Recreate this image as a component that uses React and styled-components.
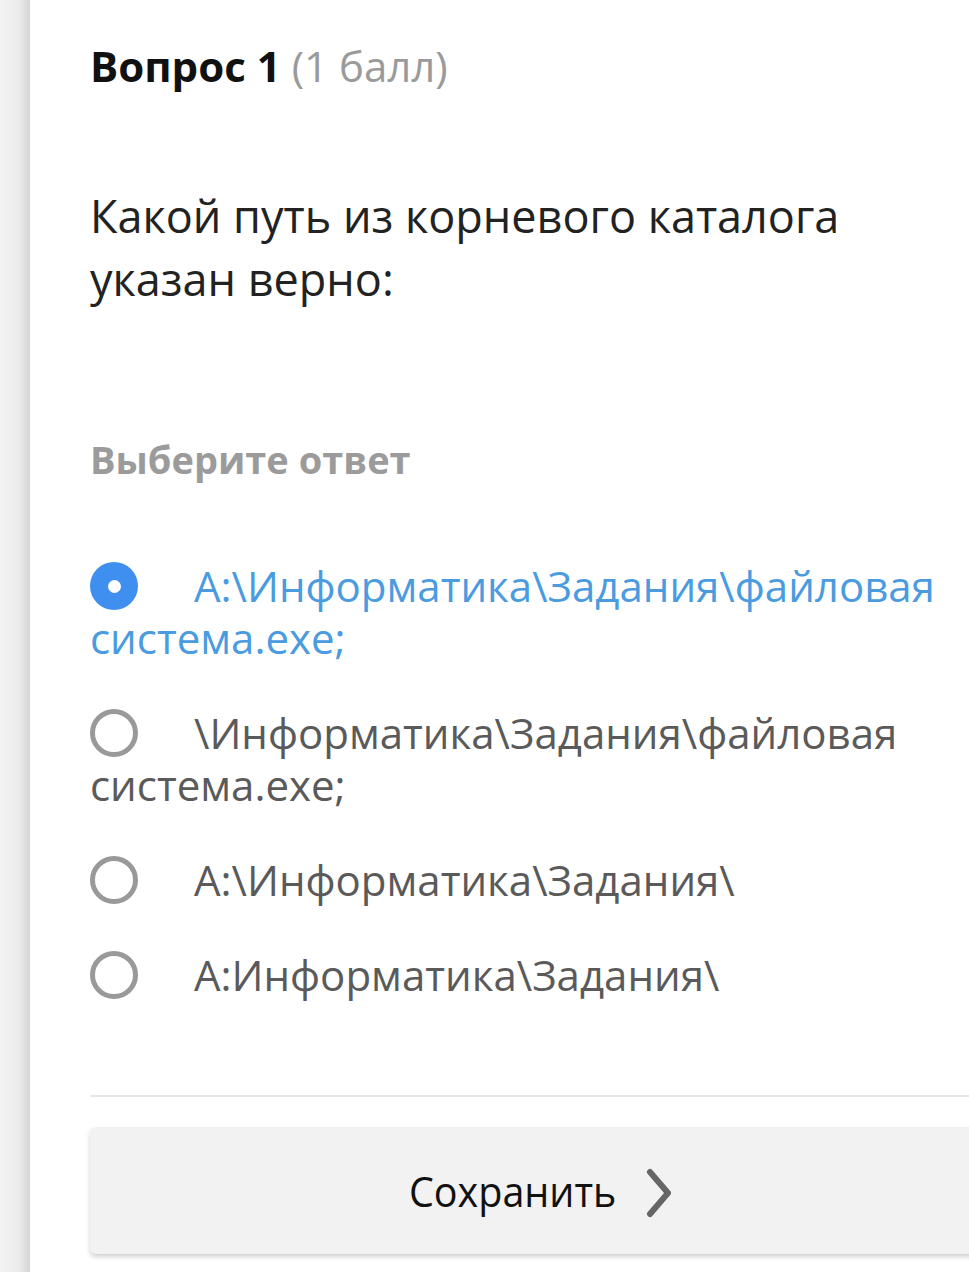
import React, { useState } from 'react';
import styled, { createGlobalStyle } from 'styled-components';

const GlobalStyle = createGlobalStyle`
  html, body {
    margin: 0;
    padding: 0;
    background: #ffffff;
    overflow-x: hidden;
  }
  body {
    font-family: "Open Sans", "Noto Sans", sans-serif;
  }
`;

const Page = styled.div`
  display: flex;
  min-height: 1272px;
`;

const SideStrip = styled.div`
  width: 30px;
  flex-shrink: 0;
  background: linear-gradient(to right, #f2f2f2 0%, #ececec 60%, #d6d6d6 100%);
`;

const Content = styled.main`
  flex: 1;
  padding: 38px 0 0 60px;
  min-width: 0;
`;

const Heading = styled.h2`
  margin: 0;
  font-size: 42px;
  font-weight: 700;
  line-height: 56px;
  color: #111;
`;

const Points = styled.span`
  font-weight: 400;
  color: #9a9a9a;
`;

const QuestionText = styled.p`
  margin: 90px 0 0;
  font-size: 45px;
  line-height: 63px;
  color: #222;
`;

const Prompt = styled.div`
  margin-top: 124px;
  font-size: 38px;
  font-weight: 700;
  color: #9b9b9b;
  line-height: 50px;
`;

const Options = styled.div`
  margin-top: 76px;
  display: flex;
  flex-direction: column;
  gap: 43px;
`;

const OptionLabel = styled.label`
  display: block;
  font-size: 42px;
  line-height: 52px;
  color: ${p => (p.$checked ? '#4a9be0' : '#5a5a5a')};
  cursor: pointer;
`;

const Radio = styled.span`
  display: inline-block;
  box-sizing: border-box;
  width: 48px;
  height: 48px;
  border-radius: 50%;
  vertical-align: -8px;
  margin-right: 56px;
  position: relative;
  border: ${p => (p.$checked ? 'none' : '5px solid #999')};
  background: ${p => (p.$checked ? '#3e8ff0' : 'transparent')};

  &::after {
    content: '';
    display: ${p => (p.$checked ? 'block' : 'none')};
    position: absolute;
    left: 50%;
    top: 50%;
    width: 13px;
    height: 13px;
    margin: -6.5px 0 0 -6.5px;
    border-radius: 50%;
    background: #fff;
  }
`;

const Divider = styled.hr`
  margin: 94px 0 0;
  border: none;
  border-top: 2px solid #e6e6e6;
  width: calc(100% + 40px);
`;

const SaveButton = styled.button`
  margin-top: 30px;
  width: calc(100% + 40px);
  height: 127px;
  border: none;
  border-radius: 6px;
  background: #f2f2f2;
  box-shadow: 0 3px 5px rgba(0, 0, 0, 0.18);
  display: flex;
  align-items: center;
  justify-content: flex-start;
  padding-left: 319px;
  font-family: "Open Sans", sans-serif;
  font-size: 42px;
  color: #111;
  cursor: pointer;
`;

const ButtonText = styled.span`
  display: inline-block;
  width: 220px;
  transform: scaleX(0.94);
  transform-origin: left center;
`;

const ChevronBox = styled.span`
  display: inline-flex;
  margin-left: 14px;
  margin-top: 4px;
`;

const options = [
  'A:\\Информатика\\Задания\\файловая система.exe;',
  '\\Информатика\\Задания\\файловая система.exe;',
  'A:\\Информатика\\Задания\\',
  'A:Информатика\\Задания\\',
];

const Chevron = () => (
  <ChevronBox>
    <svg width="32" height="50" viewBox="0 0 32 50">
      <path d="M7 4 L25 25 L7 46" fill="none" stroke="#666" strokeWidth="6" strokeLinecap="round" strokeLinejoin="round" />
    </svg>
  </ChevronBox>
);

const App = () => {
  const [selected, setSelected] = useState(0);

  return (
    <>
      <GlobalStyle />
      <Page>
        <SideStrip />
        <Content>
          <Heading>
            Вопрос 1 <Points>(1 балл)</Points>
          </Heading>
          <QuestionText>Какой путь из корневого каталога указан верно:</QuestionText>
          <Prompt>Выберите ответ</Prompt>
          <Options>
            {options.map((text, i) => (
              <OptionLabel key={i} $checked={selected === i} onClick={() => setSelected(i)}>
                <Radio $checked={selected === i} />
                {text}
              </OptionLabel>
            ))}
          </Options>
          <Divider />
          <SaveButton type="button">
            <ButtonText>Сохранить</ButtonText>
            <Chevron />
          </SaveButton>
        </Content>
      </Page>
    </>
  );
};

export default App;
